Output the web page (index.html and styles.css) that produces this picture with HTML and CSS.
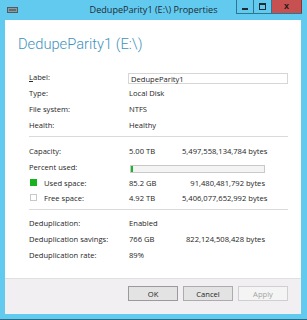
FILE: index.html
```html
<!DOCTYPE html>
<html lang="en">
<head>
  <meta charset="UTF-8">
  <title>DedupeParity1 (E:\) Properties</title>
  <link rel="stylesheet" href="styles.css">
</head>
<body>
  <div class="window">
    <!-- Title bar -->
    <div class="titlebar">
      <div class="title-icon">
        <svg width="11" height="6" viewBox="0 0 11 6">
          <rect x="0.5" y="0.5" width="10" height="5" fill="#8d9aa0" stroke="#4d5d65"/>
          <rect x="2" y="2" width="7" height="2" fill="#5f6e75"/>
        </svg>
      </div>
      <div class="title-text">DedupeParity1 (E:\) Properties</div>
      <div class="controls">
        <div class="ctl ctl-min"><span class="min-glyph"></span></div>
        <div class="ctl ctl-max"><span class="max-glyph"></span></div>
        <div class="ctl ctl-close">x</div>
      </div>
    </div>

    <!-- Dialog body -->
    <div class="client">
      <div class="page">
        <div class="heading">DedupeParity1 (E:\)</div>

        <div class="fields general">
          <div class="label"><u>L</u>abel:</div>
          <div class="textbox">DedupeParity1</div>
          <div class="label">Type:</div>
          <div class="value">Local Disk</div>
          <div class="label">File system:</div>
          <div class="value">NTFS</div>
          <div class="label">Health:</div>
          <div class="value">Healthy</div>
        </div>

        <div class="sep"></div>

        <div class="fields capacity">
          <div class="label">Capacity:</div>
          <div class="value">5.00 TB</div>
          <div class="bytes">5,497,558,134,784 bytes</div>
          <div class="label">Percent used:</div>
          <div class="progress"><div class="progress-fill" style="width: 1.7%;"></div></div>
          <div class="label swatch-label"><span class="swatch used"></span>Used space:</div>
          <div class="value">85.2 GB</div>
          <div class="bytes">91,480,481,792 bytes</div>
          <div class="label swatch-label"><span class="swatch free"></span>Free space:</div>
          <div class="value">4.92 TB</div>
          <div class="bytes">5,406,077,652,992 bytes</div>
        </div>

        <div class="sep sep-lower"></div>

        <div class="fields dedup">
          <div class="label">Deduplication:</div>
          <div class="value wide">Enabled</div>
          <div class="label">Deduplication savings:</div>
          <div class="value">766 GB</div>
          <div class="bytes">822,124,508,428 bytes</div>
          <div class="label">Deduplication rate:</div>
          <div class="value wide">89%</div>
        </div>
      </div>

      <div class="footer">
        <button class="btn btn-default">OK</button>
        <button class="btn">Cancel</button>
        <button class="btn" disabled>Apply</button>
      </div>
    </div>
  </div>
</body>
</html>
```

FILE: styles.css
```css
/* Page */
body {
  margin: 0;
  background: #ffffff;
  font-family: "Open Sans", "Liberation Sans", sans-serif;
}

.window {
  width: 307px;
  height: 319px;
  background: #62c9ef;
  border-bottom: 1px solid #2d6a84;
  display: flex;
  flex-direction: column;
}

/* Title bar */
.titlebar {
  height: 20px;
  display: grid;
  grid-template-columns: 1fr auto 1fr;
  align-items: start;
}

.title-icon {
  padding: 7px 0 0 7px;
  line-height: 0;
}

.title-text {
  font-size: 9.1px;
  line-height: 20px;
  color: #1d2b33;
}

.controls {
  justify-self: end;
  display: flex;
  margin-right: 5px;
  height: 13px;
  border-left: 1px solid #2f7592;
  border-bottom: 1px solid #2f7592;
}

.ctl {
  height: 13px;
  display: flex;
  align-items: center;
  justify-content: center;
  border-right: 1px solid #2f7592;
  box-sizing: border-box;
}

.ctl-min {
  width: 17px;
}

.ctl-max {
  width: 18px;
}

.ctl-close {
  width: 30px;
  border-right: 1px solid #8d3030;
  background: #c75050;
  color: #1a1a1a;
  font-size: 9px;
  font-weight: bold;
  font-family: "Liberation Sans", sans-serif;
  line-height: 13px;
}

.min-glyph {
  width: 6px;
  height: 2px;
  background: #1d2b33;
  margin-top: 5px;
}

.max-glyph {
  width: 5px;
  height: 4px;
  border: 1px solid #1d2b33;
  border-top-width: 2px;
}

/* White client area */
.client {
  flex: 1;
  margin: 0 6px 5px 5px;
  background: #ffffff;
  display: flex;
  flex-direction: column;
}

.page {
  padding: 15px 13px 0 13px;
}

.heading {
  font-family: Roboto, "Open Sans", sans-serif;
  font-weight: 300;
  font-size: 14.7px;
  line-height: 18px;
  color: #3f93bd;
}

/* Field grid */
.fields {
  display: grid;
  grid-template-columns: 100px 53px 83px 23px;
  margin-left: 11px;
  align-items: center;
  font-size: 7.6px;
  color: #262626;
}

.general {
  margin-top: 16px;
  grid-auto-rows: 16px;
}

.capacity {
  grid-template-rows: 16px 16px 15px 15px;
}

.dedup {
  grid-auto-rows: 16px;
}

.label {
  grid-column: 1;
  white-space: nowrap;
}

.label u {
  text-decoration: underline;
}

.value {
  white-space: nowrap;
}

.value.wide {
  grid-column: 2 / -1;
}

.bytes {
  text-align: right;
  white-space: nowrap;
}

.textbox {
  grid-column: 2 / -1;
  height: 11px;
  line-height: 10px;
  border: 1px solid #d6d6d6;
  padding-left: 2px;
  box-sizing: border-box;
  margin-left: -1px;
  margin-top: 3px;
}

.progress {
  grid-column: 2 / 4;
  height: 8px;
  margin: 3px 0 0 1px;
  border: 1px solid #c9c9c9;
  background: #f4f4f4;
  box-sizing: border-box;
}

.progress-fill {
  height: 100%;
  background: #1bb52b;
}

.swatch-label {
  display: flex;
  align-items: center;
  gap: 7px;
}

.swatch {
  width: 7px;
  height: 7px;
  margin-left: 1px;
  box-sizing: border-box;
}

.swatch.used {
  background: #17b31f;
}

.swatch.free {
  background: #ffffff;
  border: 1px solid #c8c8c8;
}

/* Separators */
.sep {
  height: 1px;
  background: #dadada;
  margin: 3px 0 6px 11px;
}

.sep-lower {
  margin: 4px 0 5px 11px;
}

/* Button band */
.footer {
  margin-top: auto;
  height: 28px;
  border-top: 1px solid #e0e0e0;
  background: #f2eff2;
  display: flex;
  justify-content: flex-end;
  align-items: flex-start;
  gap: 5px;
  padding: 7px 13px 0 0;
  box-sizing: content-box;
}

.btn {
  width: 50px;
  height: 15px;
  padding: 0;
  font-family: "Open Sans", "Liberation Sans", sans-serif;
  font-size: 7.6px;
  color: #262626;
  background: #e3e3e3;
  border: 1px solid #acacac;
  border-radius: 0;
}

.btn-default {
  border-color: #9a9a9a;
}

.btn:disabled {
  background: #f4f4f4;
  border-color: #cfcfcf;
  color: #a3a3a3;
}
```
